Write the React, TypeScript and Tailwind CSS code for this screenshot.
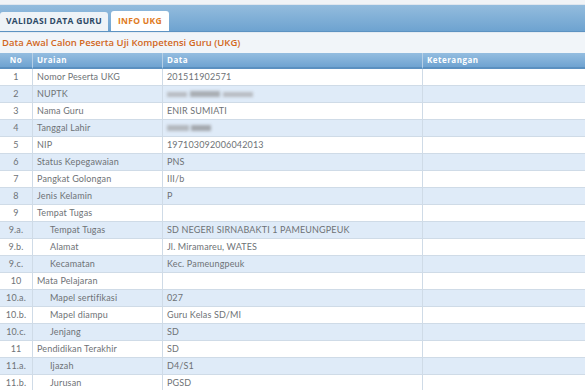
const rows: { no: string; label: string; data: string; sub?: boolean; blur?: number }[] = [
  { no: "1", label: "Nomor Peserta UKG", data: "201511902571" },
  { no: "2", label: "NUPTK", data: "", blur: 1 },
  { no: "3", label: "Nama Guru", data: "ENIR SUMIATI" },
  { no: "4", label: "Tanggal Lahir", data: "", blur: 2 },
  { no: "5", label: "NIP", data: "197103092006042013" },
  { no: "6", label: "Status Kepegawaian", data: "PNS" },
  { no: "7", label: "Pangkat Golongan", data: "III/b" },
  { no: "8", label: "Jenis Kelamin", data: "P" },
  { no: "9", label: "Tempat Tugas", data: "" },
  { no: "9.a.", label: "Tempat Tugas", data: "SD NEGERI SIRNABAKTI 1 PAMEUNGPEUK", sub: true },
  { no: "9.b.", label: "Alamat", data: "Jl. Miramareu, WATES", sub: true },
  { no: "9.c.", label: "Kecamatan", data: "Kec. Pameungpeuk", sub: true },
  { no: "10", label: "Mata Pelajaran", data: "" },
  { no: "10.a.", label: "Mapel sertifikasi", data: "027", sub: true },
  { no: "10.b.", label: "Mapel diampu", data: "Guru Kelas SD/MI", sub: true },
  { no: "10.c.", label: "Jenjang", data: "SD", sub: true },
  { no: "11", label: "Pendidikan Terakhir", data: "SD" },
  { no: "11.a.", label: "Ijazah", data: "D4/S1", sub: true },
  { no: "11.b.", label: "Jurusan", data: "PGSD", sub: true },
]

function Blurred({ kind }: { kind: number }) {
  // data disensor (NUPTK / tanggal lahir)
  if (kind === 1) {
    return (
      <div className="flex items-center gap-[3px] blur-[1.5px]">
        <span className="h-[5px] w-[20px] bg-[#b8bcc2]" />
        <span className="h-[6px] w-[30px] bg-[#a9adb3]" />
        <span className="h-[5px] w-[30px] bg-[#b8bcc2]" />
      </div>
    )
  }
  return (
    <div className="flex items-center gap-[2px] blur-[1.5px]">
      <span className="h-[6px] w-[22px] bg-[#b4b8be]" />
      <span className="h-[6px] w-[20px] bg-[#a4a8ae]" />
    </div>
  )
}

export default function App() {
  return (
    <div className="w-[585px] h-[390px] overflow-hidden bg-[#f4f7fa] font-['Open_Sans',sans-serif]">
      {/* strip atas */}
      <div className="h-[5px] bg-[#f0f3f6] border-b border-[#dfe6ee]" />

      {/* tab bar */}
      <div className="h-[27px] flex items-end gap-[3px] bg-gradient-to-b from-[#93bcdd] to-[#6ea3d0] border-b border-[#5d93c2]">
        <div className="h-[19px] w-[108px] flex items-center justify-center bg-[#eef3f7] rounded-t-[3px] text-[8.5px] font-bold text-[#2d4a66] tracking-[0.3px]">
          VALIDASI DATA GURU
        </div>
        <div className="h-[20px] w-[58px] flex items-center justify-center bg-white rounded-t-[3px] text-[8.5px] font-bold text-[#e07a22] tracking-[0.3px]">
          INFO UKG
        </div>
      </div>

      {/* judul */}
      <div className="h-[21px] flex items-center pl-[2px] bg-[#f1f5f9] border-t border-[#e4ebf2] text-[9.5px] font-semibold text-[#d2671c]">
        Data Awal Calon Peserta Uji Kompetensi Guru (UKG)
      </div>

      {/* tabel */}
      <div className="grid grid-cols-[32px_130px_260px_1fr] text-[8px] font-bold text-white tracking-[0.5px]">
        <div className="h-[16px] flex items-center justify-center bg-gradient-to-b from-[#94bde0] to-[#6fa3d1] border-b-2 border-[#5b90c0]">
          No
        </div>
        <div className="h-[16px] flex items-center pl-[4px] bg-gradient-to-b from-[#94bde0] to-[#6fa3d1] border-b-2 border-[#5b90c0] border-l border-l-[#b7d0e6]">
          Uraian
        </div>
        <div className="h-[16px] flex items-center pl-[4px] bg-gradient-to-b from-[#94bde0] to-[#6fa3d1] border-b-2 border-[#5b90c0] border-l border-l-[#b7d0e6]">
          Data
        </div>
        <div className="h-[16px] flex items-center pl-[4px] bg-gradient-to-b from-[#94bde0] to-[#6fa3d1] border-b-2 border-[#5b90c0] border-l border-l-[#b7d0e6]">
          Keterangan
        </div>

        {rows.map((r, i) => {
          const bg = i % 2 === 1 ? "bg-[#dfebf8]" : "bg-white"
          return (
            <div key={i} className="contents font-['Lato',sans-serif] font-normal text-[9px] text-[#6e7276] tracking-[0.15px]">
              <div className={`h-[17px] flex items-center justify-center border-b border-[#cfdbe7] ${bg}`}>{r.no}</div>
              <div className={`h-[17px] flex items-center border-b border-l border-[#cfdbe7] ${bg} ${r.sub ? "pl-[17px]" : "pl-[4px]"}`}>
                {r.label}
              </div>
              <div className={`h-[17px] flex items-center pl-[4px] border-b border-l border-[#cfdbe7] ${bg}`}>
                {r.blur ? <Blurred kind={r.blur} /> : r.data}
              </div>
              <div className={`h-[17px] border-b border-l border-[#cfdbe7] ${bg}`} />
            </div>
          )
        })}
      </div>
    </div>
  )
}
